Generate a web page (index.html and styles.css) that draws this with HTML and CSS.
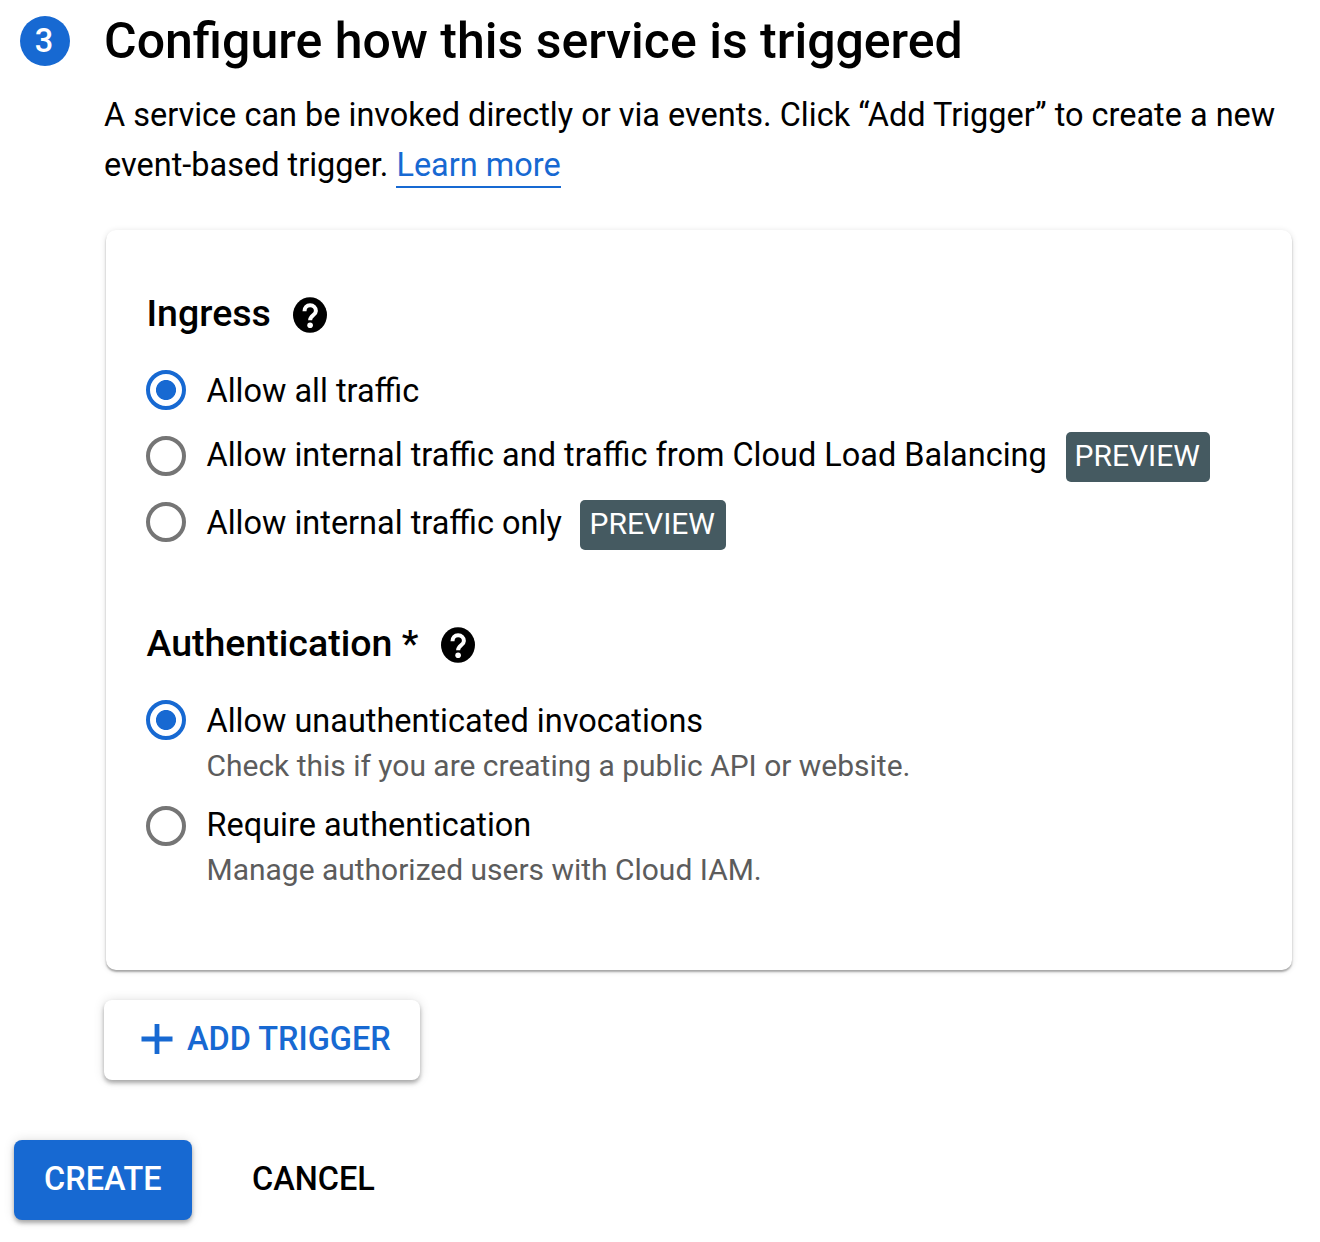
FILE: index.html
```html
<!DOCTYPE html>
<html lang="en">
<head>
<meta charset="utf-8">
<title>Create service</title>
<link rel="stylesheet" href="styles.css">
</head>
<body>
<main class="page">
  <section class="step">
    <div class="step-number">3</div>
    <div class="step-body">
      <h1 class="title"><span>Configure how this service is triggered</span></h1>
      <p class="intro"><span>A service can be invoked directly or via events. Click “Add Trigger” to create a new</span><br><span>event-based trigger. </span><a class="link" href="#">Learn more</a></p>
      <div class="card">
        <h2 class="group-title"><span>Ingress</span>
          <svg class="help" viewBox="0 0 36 36"><ellipse cx="18" cy="18" rx="17" ry="17.8"/><path d="M12.5 14.2C12.5 10.6 14.8 8.3 18.1 8.3s5.8 2.3 5.8 5.6c0 4.2-5.8 4.6-5.8 9.3" fill="none" stroke="#fff" stroke-width="4"/><circle cx="18.1" cy="28.2" r="2.8" fill="#fff"/></svg>
        </h2>
        <div class="option"><i class="radio on"></i><span class="label">Allow all traffic</span></div>
        <div class="option raised"><i class="radio"></i><span class="label">Allow internal traffic and traffic from Cloud Load Balancing</span><span class="badge">PREVIEW</span></div>
        <div class="option last"><i class="radio"></i><span class="label">Allow internal traffic only</span><span class="badge wide">PREVIEW</span></div>
        <h2 class="group-title auth"><span>Authentication *</span>
          <svg class="help" viewBox="0 0 36 36"><ellipse cx="18" cy="18" rx="17" ry="17.8"/><path d="M12.5 14.2C12.5 10.6 14.8 8.3 18.1 8.3s5.8 2.3 5.8 5.6c0 4.2-5.8 4.6-5.8 9.3" fill="none" stroke="#fff" stroke-width="4"/><circle cx="18.1" cy="28.2" r="2.8" fill="#fff"/></svg>
        </h2>
        <div class="option"><i class="radio on"></i><span class="label">Allow unauthenticated invocations</span></div>
        <p class="hint">Check this if you are creating a public API or website.</p>
        <div class="option raised second"><i class="radio"></i><span class="label">Require authentication</span></div>
        <p class="hint">Manage authorized users with Cloud IAM.</p>
      </div>
      <button class="button add"><svg class="plus" viewBox="0 0 32 32"><path d="M16 1v30M.5 16h31"/></svg><span>ADD TRIGGER</span></button>
    </div>
  </section>
  <footer class="actions">
    <button class="button create"><span>CREATE</span></button>
    <button class="cancel"><span>CANCEL</span></button>
  </footer>
</main>
</body>
</html>
```
FILE: styles.css
```css
* { box-sizing: border-box; }
body {
  margin: 0;
  background: #fff;
  color: #000;
  font: 400 32.47px/50px Roboto, sans-serif;
}
h1, h2, p { margin: 0; font-weight: 500; }
button { border: 0; font: inherit; font-weight: 500; }
.page { height: 1242px; overflow: hidden; padding: 16px 0 0 14px; }
.step { display: flex; padding-left: 6px; }
.step-number {
  width: 50px; height: 50px; margin-right: 34px; border-radius: 50%;
  padding-right: 2px;
  background: #1769d2; color: #fff; text-align: center; font-weight: 500;
}
.step-body { width: 1190px; }
.title { font-size: 50px; line-height: 50px; }
.intro { margin-top: 24px; font-weight: 400; white-space: nowrap; }
.link { display: inline-block; height: 48px; border-bottom: 2px solid #1769d2; color: #1769d2; text-decoration: none; vertical-align: top; }
.card {
  width: 1186px; height: 740px; margin: 40px 0 0 2px; padding: 58px 40px 0;
  border-radius: 10px;
  box-shadow: 0 2px 2px rgba(0,0,0,.3), 0 1px 6px rgba(0,0,0,.12);
}
.group-title { display: flex; align-items: center; height: 52px; margin-bottom: 17px; padding-left: .5px; font-size: 37.5px; }
.group-title span { padding-bottom: 2px; }
.help { width: 36px; height: 36px; margin: 2px 0 0 21.5px; }
.option { display: flex; align-items: center; height: 66px; }
.radio { width: 40px; height: 40px; margin-right: 20.5px; border: 4px solid #757575; border-radius: 50%; }
.radio.on { border-color: #1769d2; background: radial-gradient(circle, #1769d2 9.6px, transparent 10.4px); }
.label { padding-top: 2px; white-space: nowrap; }
.raised .label { padding: 0 0 2px; }
.badge {
  width: 144px; height: 50px; margin: 2px 0 0 19px; padding-right: 1px; border-radius: 5px;
  background: #455a61; color: #fff; font-size: 30px; line-height: 48px; text-align: center;
}
.badge.wide { width: 146px; margin: 6px 0 0 18px; }
.auth { margin-top: 63px; }
.hint { height: 40px; margin: -7px 0 0 60.5px; color: #5c5c5c; font-size: 29.98px; font-weight: 400; line-height: 40px; }
.second { margin-top: 7px; }
.second + .hint { margin-top: -9px; }
.button {
  display: flex; align-items: center; height: 80px; border-radius: 8px;
  box-shadow: 0 3px 4px rgba(0,0,0,.3), 0 0 12px rgba(0,0,0,.12);
}
.add { width: 316px; margin-top: 30px; padding: 0 0 2px 37px; background: #fff; color: #1769d2; }
.plus { width: 32px; height: 32px; margin-right: 14px; stroke: currentColor; stroke-width: 4.8; }
.actions { display: flex; align-items: center; margin-top: 60px; }
.create { width: 178px; padding: 0 0 2px 30px; background: #1769d2; color: #fff; }
.cancel { height: 80px; margin-left: 60px; padding: 0 0 2px; background: none; color: #000; }
```
